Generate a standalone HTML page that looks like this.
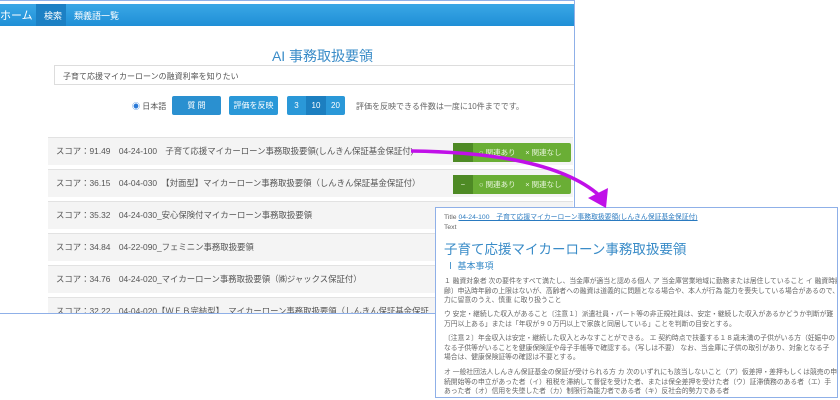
<!DOCTYPE html>
<html><head><meta charset="utf-8"><style>
*{margin:0;padding:0;box-sizing:border-box}
body{width:840px;height:400px;background:#fff;position:relative;overflow:hidden;font-family:"Liberation Sans","Noto Sans CJK JP",sans-serif;color:#555}
.abs{position:absolute}
#left{left:0;top:0;width:575px;height:314px;border:1.5px solid #8fb0e8;border-left:none;background:#fff;overflow:hidden}
#nav{left:0;top:3px;width:574px;height:22px;background:linear-gradient(#3aa7e6,#1f8fd6)}
#nav span{position:absolute;color:#fff;font-size:9px;top:5px}
.row{position:absolute;left:48px;width:525px;height:28px;background:#f4f4f4;border-top:1px solid #e2e2e2;font-size:8.4px;color:#555;padding:7px 0 0 8px;white-space:nowrap}
.g{position:absolute;left:405px;top:5px;width:118px;height:19px;background:#6aae35;border-radius:2px;color:#e8f5dc;font-size:7.5px;line-height:19px}
.g i{position:absolute;left:0;top:0;width:20px;height:19px;background:#4e8a25;font-style:normal;text-align:center}
.btn{position:absolute;background:#2a98d8;color:#fff;font-size:8px;text-align:center;line-height:19px;border-radius:2px;height:19px;top:95px}
#right{left:435px;top:207px;width:403px;height:191px;border:1.5px solid #8fb0e8;background:#fff;padding:5px 8px;font-size:6.8px;color:#666;line-height:9.6px;overflow:hidden;white-space:nowrap}
</style></head><body>
<div id="left" class="abs">
<div id="nav" class="abs"><span style="left:0;font-size:11px;top:3px">ホーム</span><div class="abs" style="left:36px;top:0;width:30px;height:22px;background:#1c80c4"></div><span style="left:44px">検索</span><span style="left:74px">類義語一覧</span></div>
<div class="abs" style="left:0;top:45px;width:575px;text-align:center;padding-left:70px;font-size:14px;color:#3a8cc8">AI 事務取扱要領</div>
<div class="abs" style="left:54px;top:64px;width:525px;height:20px;border:1px solid #ddd;font-size:8px;padding:5px 8px;color:#555">子育て応援マイカーローンの融資利率を知りたい</div>
<div class="abs" style="left:132px;top:100px;font-size:8px"><span style="color:#2a7ad8">◉</span> 日本語</div>
<div class="btn" style="left:172px;width:49px;background:#2a90d0">質 問</div>
<div class="btn" style="left:229px;width:49px">評価を反映</div>
<div class="btn" style="left:287px;width:58px"><span style="position:absolute;left:0;width:19px">3</span><span style="position:absolute;left:19px;width:20px;background:#1c7fc0">10</span><span style="position:absolute;left:39px;width:19px">20</span></div>
<div class="abs" style="left:356px;top:100px;font-size:8px;color:#666">評価を反映できる件数は一度に10件までです。</div>
<div class="row" style="top:136px">スコア：91.49　04-24-100　子育て応援マイカーローン事務取扱要領(しんきん保証基金保証付)<div class="g"><i>−</i><span style="margin-left:26px">○ 関連あり　 × 関連なし</span></div></div>
<div class="row" style="top:168px">スコア：36.15　04-04-030　【対面型】マイカーローン事務取扱要領（しんきん保証基金保証付）<div class="g"><i>−</i><span style="margin-left:26px">○ 関連あり　 × 関連なし</span></div></div>
<div class="row" style="top:200px">スコア：35.32　04-24-030_安心保険付マイカーローン事務取扱要領<div class="g"><i>−</i><span style="margin-left:26px">○ 関連あり　 × 関連なし</span></div></div>
<div class="row" style="top:232px">スコア：34.84　04-22-090_フェミニン事務取扱要領</div>
<div class="row" style="top:264px">スコア：34.76　04-24-020_マイカーローン事務取扱要領（㈱ジャックス保証付）</div>
<div class="row" style="top:296px">スコア：32.22　04-04-020【ＷＥＢ完結型】　マイカーローン事務取扱要領（しんきん保証基金保証</div>
</div>
<div id="right" class="abs">
<div>Title <span style="color:#2a7ac0;text-decoration:underline">04-24-100　子育て応援マイカーローン事務取扱要領(しんきん保証基金保証付)</span></div>
<div>Text</div>
<div style="font-size:13.5px;color:#3a8cc8;line-height:18px;margin-top:9px">子育て応援マイカーローン事務取扱要領</div>
<div style="font-size:9px;color:#3a8cc8;line-height:14px;margin-left:2px">Ⅰ 基本事項</div>
<div style="margin-top:4px">１ 融資対象者 次の要件をすべて満たし、当金庫が適当と認める個人 ア 当金庫営業地域に勤務または居住していること イ 融資時齢<br>齢〕申込時年齢の上限はないが、高齢者への融資は道義的に問題となる場合や、本人が行為 能力を喪失している場合があるので、<br>力に留意のうえ、慎重 に取り扱うこと</div>
<div style="margin-top:4px">ウ 安定・継続した収入があること〔注意１〕派遣社員・パート等の非正規社員は、安定・継続した収入があるかどうか判断が難<br>万円以上ある」または「年収が９０万円以上で家族と同居している」ことを判断の目安とする。</div>
<div style="margin-top:5px">〔注意２〕年金収入は安定・継続した収入とみなすことができる。 エ 契約時点で扶養する１８歳未満の子供がいる方（妊娠中の<br>なる子供等がいることを健康保険証や母子手帳等で確認する。（写しは不要） なお、当金庫に子供の取引があり、対象となる子<br>場合は、健康保険証等の確認は不要とする。</div>
<div style="margin-top:5px">オ 一般社団法人しんきん保証基金の保証が受けられる方 カ 次のいずれにも該当しないこと（ア）仮差押・差押もしくは競売の申<br>続開始等の申立があった者（イ）租税を滞納して督促を受けた者、または保全差押を受けた者（ウ）証滞債務のある者（エ）手<br>あった者（オ）信用を失墜した者（カ）制限行為能力者である者（キ）反社会的勢力である者</div>
</div>
<svg class="abs" style="left:0;top:0" width="840" height="400"><path d="M411 151 C 480 152, 560 160, 600 196" stroke="#c010e8" stroke-width="3.5" fill="none"/><polygon points="606,208 588,198 608,188" fill="#c010e8"/></svg>
</body></html>
